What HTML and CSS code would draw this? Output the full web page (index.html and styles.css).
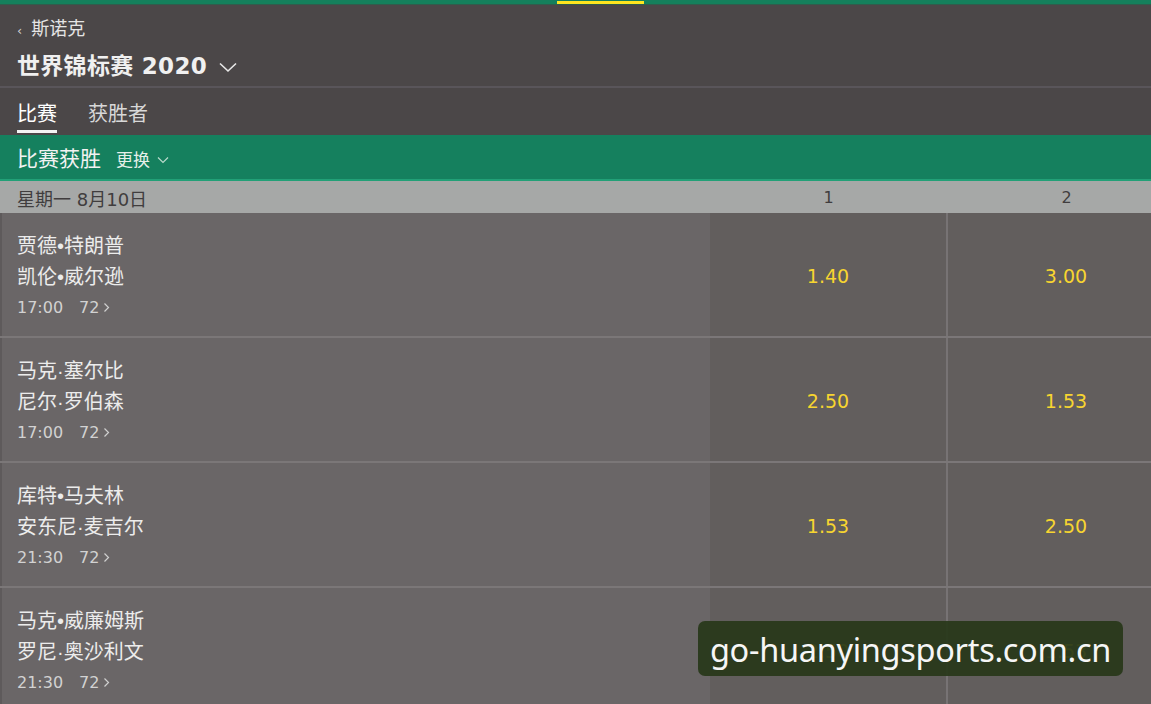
FILE: index.html
```html
<!DOCTYPE html>
<html lang="zh-CN">
<head>
<meta charset="utf-8">
<title>世界锦标赛 2020</title>
<link rel="stylesheet" href="styles.css">
</head>
<body>
<div class="page">
  <div class="topbar"><span class="topbar-mark"></span></div>
  <header class="header">
    <div class="crumb"><span class="crumb-arrow">‹</span>斯诺克</div>
    <h1 class="title">世界锦标赛 2020
      <svg class="title-chev" width="18" height="12" viewBox="0 0 18 12"><path d="M1 2.5 L9 10 L17 2.5" fill="none" stroke="#e8e8e8" stroke-width="1.6"/></svg>
    </h1>
  </header>
  <nav class="tabs">
    <span class="tab tab-active">比赛</span>
    <span class="tab">获胜者</span>
  </nav>
  <div class="market">
    <span class="market-name">比赛获胜</span>
    <span class="market-switch">更换
      <svg width="12" height="8" viewBox="0 0 12 8"><path d="M1 1.5 L6 6.5 L11 1.5" fill="none" stroke="#b9d9cb" stroke-width="1.2"/></svg>
    </span>
  </div>
  <div class="date-row">
    <div class="date-label">星期一 8月10日</div>
    <div class="col-head">1</div>
    <div class="col-head">2</div>
  </div>
  <div class="events">
    <div class="event">
      <div class="event-info">
        <div class="player">贾德•特朗普</div>
        <div class="player">凯伦•威尔逊</div>
        <div class="meta"><span>17:00</span><span class="more">72 <svg width="7" height="11" viewBox="0 0 7 11"><path d="M1.5 1.5 L5.5 5.5 L1.5 9.5" fill="none" stroke="#d0d0d0" stroke-width="1.2"/></svg></span></div>
      </div>
      <div class="odd">1.40</div>
      <div class="odd">3.00</div>
    </div>
    <div class="event">
      <div class="event-info">
        <div class="player">马克·塞尔比</div>
        <div class="player">尼尔·罗伯森</div>
        <div class="meta"><span>17:00</span><span class="more">72 <svg width="7" height="11" viewBox="0 0 7 11"><path d="M1.5 1.5 L5.5 5.5 L1.5 9.5" fill="none" stroke="#d0d0d0" stroke-width="1.2"/></svg></span></div>
      </div>
      <div class="odd">2.50</div>
      <div class="odd">1.53</div>
    </div>
    <div class="event">
      <div class="event-info">
        <div class="player">库特•马夫林</div>
        <div class="player">安东尼·麦吉尔</div>
        <div class="meta"><span>21:30</span><span class="more">72 <svg width="7" height="11" viewBox="0 0 7 11"><path d="M1.5 1.5 L5.5 5.5 L1.5 9.5" fill="none" stroke="#d0d0d0" stroke-width="1.2"/></svg></span></div>
      </div>
      <div class="odd">1.53</div>
      <div class="odd">2.50</div>
    </div>
    <div class="event">
      <div class="event-info">
        <div class="player">马克•威廉姆斯</div>
        <div class="player">罗尼·奥沙利文</div>
        <div class="meta"><span>21:30</span><span class="more">72 <svg width="7" height="11" viewBox="0 0 7 11"><path d="M1.5 1.5 L5.5 5.5 L1.5 9.5" fill="none" stroke="#d0d0d0" stroke-width="1.2"/></svg></span></div>
      </div>
      <div class="odd odd-hidden">2.50</div>
      <div class="odd odd-hidden">1.53</div>
    </div>
  </div>
  <div class="watermark">go-huanyingsports.com.cn</div>
</div>
</body>
</html>
```

FILE: styles.css
```css
* { box-sizing: border-box; }
html, body { margin: 0; padding: 0; }
body {
  width: 1151px;
  height: 704px;
  overflow: hidden;
  background: #6a6667;
  font-family: "Liberation Sans", "Noto Sans CJK SC", sans-serif;
}
.page {
  position: relative;
  width: 1186px;
}
.topbar {
  height: 5px;
  background: #14805c;
  border-bottom: 1px solid #2f5d4c;
  position: relative;
}
.topbar-mark {
  position: absolute;
  left: 557px;
  top: 1px;
  width: 87px;
  height: 3px;
  background: #ffe620;
}
.header {
  background: #4b4748;
  padding: 8px 17px 0;
  height: 83px;
  border-bottom: 2px solid #59555a;
}
.crumb {
  color: #e4e4e4;
  font-size: 18px;
  line-height: 26px;
  display: flex;
  align-items: center;
}
.crumb-arrow {
  font-family: "DejaVu Sans", sans-serif;
  font-size: 13px;
  color: #cfcfcf;
  margin-right: 9px;
  margin-top: 5px;
}
.title {
  margin: 7px 0 0;
  color: #f0f0f0;
  font-family: "DejaVu Sans", "Noto Sans CJK SC", sans-serif;
  font-size: 23px;
  font-weight: 700;
  line-height: 30px;
  display: flex;
  align-items: center;
  gap: 12px;
  letter-spacing: 0.3px;
}
.title-chev { margin-top: 2px; }
.tabs {
  background: #4b4748;
  height: 47px;
  padding: 0 17px;
  display: flex;
  gap: 31px;
}
.tab {
  color: #d8d8d8;
  font-size: 20px;
  line-height: 26px;
  padding-top: 13px;
  height: 46px;
}
.tab-active {
  color: #ffffff;
  border-bottom: 3px solid #f4f4f4;
  height: 45px;
}
.market {
  background: #15805e;
  height: 46px;
  border-bottom: 2px solid #22a077;
  padding: 0 17px;
  display: flex;
  align-items: center;
  gap: 15px;
}
.market-name {
  color: #f2f2f2;
  font-size: 21px;
  line-height: 26px;
  margin-top: 3px;
}
.market-switch {
  color: #e6efe9;
  font-size: 17px;
  display: flex;
  align-items: center;
  gap: 7px;
  margin-top: 3px;
}
.market-switch svg { margin-top: 3px; }
.date-row {
  background: #a6a8a7;
  height: 32px;
  display: grid;
  grid-template-columns: 710px 238px 238px;
  align-items: center;
  color: #403d3e;
  font-family: "DejaVu Sans", "Noto Sans CJK SC", sans-serif;
  font-size: 18px;
  padding-top: 1px;
}
.date-label { padding-left: 17px; }
.col-head {
  text-align: center;
  font-size: 16px;
  padding-right: 1px;
}
.event {
  display: grid;
  grid-template-columns: 710px 238px 238px;
  height: 125px;
  border-bottom: 2px solid #7b7778;
}
.event-info {
  background: #6a6667;
  padding: 18px 15px 0;
  border-left: 2px solid #5e5a5b;
}
.player {
  color: #ececec;
  font-size: 20px;
  line-height: 31px;
}
.meta {
  color: #d2d2d2;
  font-family: "DejaVu Sans", sans-serif;
  font-size: 16px;
  margin-top: 5px;
  display: flex;
  gap: 16px;
  align-items: center;
}
.more { display: inline-flex; align-items: center; gap: 4px; }
.odd {
  background: #625e5d;
  border-right: 2px solid #777374;
  color: #f7d530;
  font-family: "DejaVu Sans", sans-serif;
  font-size: 19px;
  display: flex;
  align-items: center;
  justify-content: center;
  padding-top: 2px;
}
.watermark {
  position: absolute;
  left: 698px;
  top: 621px;
  width: 425px;
  height: 55px;
  background: rgba(40, 56, 26, 0.93);
  border-radius: 7px;
  color: #f6f6f6;
  font-family: "Noto Sans", sans-serif;
  font-size: 32.5px;
  line-height: 58px;
  text-align: center;
  letter-spacing: -0.3px;
  white-space: nowrap;
}
```
